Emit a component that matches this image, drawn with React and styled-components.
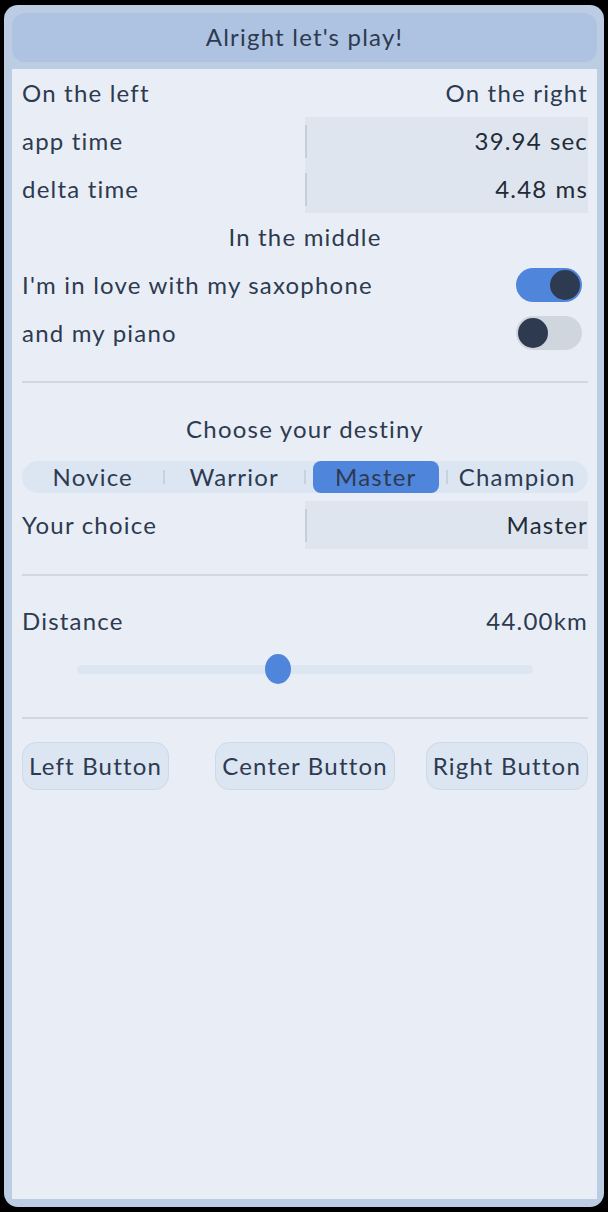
import React from "react";
import styled, { createGlobalStyle } from "styled-components";

const Global = createGlobalStyle`
  html, body { margin: 0; padding: 0; background: #000; }
  body {
    font-family: Lato, "Noto Sans", "DejaVu Sans", sans-serif;
    color: #2d3a50;
    letter-spacing: 1.2px;
  }
  * { box-sizing: border-box; }
`;

const Window = styled.div`
  margin: 5px 4px;
  height: 1202px;
  background: #bccde3;
  border-radius: 14px;
  padding: 8px 7px 8px 8px;
  display: flex;
  flex-direction: column;
  gap: 7px;
`;

const Header = styled.div`
  height: 49px;
  padding-bottom: 2px;
  background: #adc3e1;
  border-radius: 13px;
  display: flex;
  align-items: center;
  justify-content: center;
  font-size: 24px;
  color: #2d3a50;
`;

const Content = styled.div`
  flex: 1;
  background: #e9eef6;
  padding: 0 9px 0 10px;
  display: flex;
  flex-direction: column;
`;

const Row = styled.div`
  height: 48px;
  padding-bottom: 2px;
  display: flex;
  align-items: center;
  justify-content: ${(p) => (p.$center ? "center" : "space-between")};
  font-size: 24px;
`;

const SplitRow = styled.div`
  height: 48px;
  display: grid;
  grid-template-columns: 1fr 1fr;
  align-items: stretch;
  font-size: 24px;
`;

const Label = styled.span`
  display: flex;
  align-items: center;
  padding-bottom: 2px;
`;

const ValueBox = styled.div`
  background: #dfe5ee;
  display: flex;
  align-items: center;
  justify-content: flex-end;
  padding-bottom: 2px;
  position: relative;
  color: #222b38;
  &::before {
    content: "";
    position: absolute;
    left: 0;
    top: 8px;
    bottom: 7px;
    width: 2px;
    background: #c6ceda;
  }
`;

const Unit = styled.span`
  margin-left: 8px;
`;

const Toggle = styled.div`
  width: 66px;
  height: 34px;
  border-radius: 17px;
  background: ${(p) => (p.$on ? "#4f86db" : "#d0d6dd")};
  padding: 2px;
  display: flex;
  justify-content: ${(p) => (p.$on ? "flex-end" : "flex-start")};
  margin: 2px 6px 0 0;
`;

const Knob = styled.div`
  width: 30px;
  height: 30px;
  border-radius: 50%;
  background: #2d3a50;
`;

const Separator = styled.hr`
  border: none;
  height: 2px;
  background: #d1d8e2;
  margin: ${(p) => p.$m || "24px 0 22px"};
  width: 100%;
`;

const Segmented = styled.div`
  height: 32px;
  margin: 8px 0;
  border-radius: 16px;
  background: #dce5f2;
  display: grid;
  grid-template-columns: repeat(4, 1fr);
`;

const Segment = styled.div`
  position: relative;
  display: flex;
  align-items: center;
  justify-content: center;
  font-size: 24px;
  &::before {
    content: "";
    display: ${(p) => (p.$first ? "none" : "block")};
    position: absolute;
    left: -1px;
    top: 9px;
    bottom: 9px;
    width: 2px;
    background: #c8d1de;
  }
`;

const SegmentFill = styled.div`
  position: absolute;
  inset: 0 8px;
  background: #4f86db;
  border-radius: 8px;
`;

const SegmentText = styled.span`
  position: relative;
  margin-bottom: 2px;
`;

const SliderRow = styled.div`
  height: 48px;
  display: flex;
  align-items: center;
  padding: 0 55px;
`;

const Track = styled.div`
  position: relative;
  flex: 1;
  height: 9px;
  border-radius: 5px;
  background: #dce5f2;
`;

const Thumb = styled.div`
  position: absolute;
  top: 50%;
  width: 26px;
  height: 30px;
  border-radius: 50%;
  background: #4f86db;
  transform: translate(-50%, -50%);
`;

const ButtonRow = styled.div`
  display: grid;
  grid-template-columns: 1fr auto 1fr;
  align-items: center;
`;

const Button = styled.button`
  justify-self: ${(p) => p.$align || "center"};
  height: 48px;
  padding: 0 6px 2px;
  border-radius: 14px;
  background: #dce5f2;
  border: 1px solid #d0d9e6;
  font-family: inherit;
  letter-spacing: inherit;
  font-size: 24px;
  color: #2d3a50;
`;

const options = ["Novice", "Warrior", "Master", "Champion"];
const selected = 2;
const distance = 44;

export default function App() {
  return (
    <>
      <Global />
      <Window>
        <Header>Alright let's play!</Header>
        <Content>
          <Row>
            <span>On the left</span>
            <span>On the right</span>
          </Row>
          <SplitRow>
            <Label>app time</Label>
            <ValueBox>
              39.94<Unit>sec</Unit>
            </ValueBox>
          </SplitRow>
          <SplitRow>
            <Label>delta time</Label>
            <ValueBox>
              4.48<Unit>ms</Unit>
            </ValueBox>
          </SplitRow>
          <Row $center>In the middle</Row>
          <Row>
            <span>I'm in love with my saxophone</span>
            <Toggle $on>
              <Knob />
            </Toggle>
          </Row>
          <Row>
            <span>and my piano</span>
            <Toggle>
              <Knob />
            </Toggle>
          </Row>
          <Separator />
          <Row $center>Choose your destiny</Row>
          <Segmented>
            {options.map((o, i) => (
              <Segment key={o} $first={i === 0}>
                {i === selected && <SegmentFill />}
                <SegmentText>{o}</SegmentText>
              </Segment>
            ))}
          </Segmented>
          <SplitRow>
            <Label>Your choice</Label>
            <ValueBox>{options[selected]}</ValueBox>
          </SplitRow>
          <Separator $m="25px 0 21px" />
          <Row>
            <span>Distance</span>
            <span>{distance.toFixed(2)}km</span>
          </Row>
          <SliderRow>
            <Track>
              <Thumb style={{ left: `${distance}%` }} />
            </Track>
          </SliderRow>
          <Separator $m="24px 0 23px" />
          <ButtonRow>
            <Button $align="start">Left Button</Button>
            <Button>Center Button</Button>
            <Button $align="end">Right Button</Button>
          </ButtonRow>
        </Content>
      </Window>
    </>
  );
}
